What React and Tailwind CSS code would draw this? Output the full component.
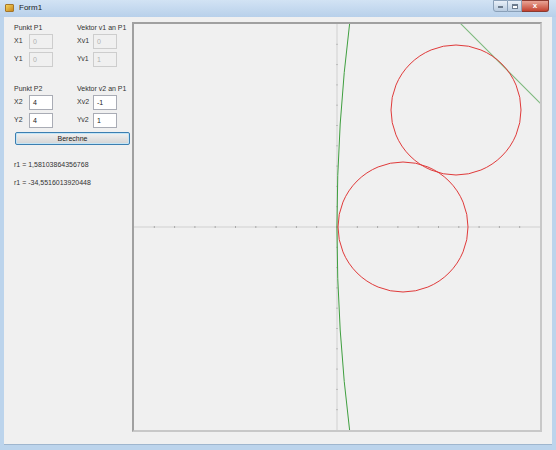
import React from 'react';

const font = { fontFamily: '"Liberation Sans", Arial, sans-serif' };

const TextBox = ({ value, disabled }) => (
    <div
        className={`w-[24px] h-[15px] border pl-[3px] text-[7px] leading-[13px] ${disabled ? 'border-[#cdcdcd] bg-[#f0f0f0] text-[#b0b0b0]' : 'border-[#a9acb5] bg-white text-[#222]'}`}
    >
        {value}
    </div>
);

const Field = ({ label, value, disabled, labelWidth }) => (
    <div className="flex items-center h-[15px]">
        <span className={`${labelWidth} text-[7px] text-[#333]`}>{label}</span>
        <TextBox value={value} disabled={disabled} />
    </div>
);

const Group = ({ title1, title2, rows, disabled }) => (
    <div className="flex flex-col">
        <div className="flex text-[7px] leading-[9px] text-[#333]">
            <span className="w-[63px]">{title1}</span>
            <span>{title2}</span>
        </div>
        <div className="flex flex-col gap-[3px] mt-[2px]">
            {rows.map((r, i) => (
                <div key={i} className="flex">
                    <div className="w-[63px]">
                        <Field label={r[0]} value={r[1]} disabled={disabled} labelWidth="w-[15px]" />
                    </div>
                    <Field label={r[2]} value={r[3]} disabled={disabled} labelWidth="w-[16px]" />
                </div>
            ))}
        </div>
    </div>
);

const Plot = () => {
    const c = 203;
    const step = 406 / 20;
    const ticks = [];
    for (let i = 1; i < 20; i++) ticks.push(i * step);
    const R = 1650;
    const off = R - Math.sqrt(R * R - 206 * 206);
    return (
        <svg width="406" height="406" className="block overflow-hidden">
            <line x1="0" y1={c} x2="406" y2={c} stroke="#d0d0d0" strokeWidth="1" />
            <line x1={c} y1="0" x2={c} y2="406" stroke="#d0d0d0" strokeWidth="1" />
            {ticks.map((t, i) => (
                <g key={i}>
                    <line x1={t} y1={c - 1} x2={t} y2={c + 1} stroke="#a8a8a8" strokeWidth="1" />
                    <line x1={c - 1} y1={t} x2={c + 1} y2={t} stroke="#bcbcbc" strokeWidth="1" />
                </g>
            ))}
            <path
                d={`M ${c + off} -3 A ${R} ${R} 0 0 0 ${c + off} 409`}
                fill="none"
                stroke="#3f9f3f"
                strokeWidth="1"
            />
            <line x1="322" y1="-5" x2="430" y2="103" stroke="#7cb87c" strokeWidth="1.1" />
            <circle cx="322" cy="86" r="65" fill="none" stroke="#e03a3a" strokeWidth="1" />
            <circle cx="269" cy={c} r="65" fill="none" stroke="#e03a3a" strokeWidth="1" />
        </svg>
    );
};

export default function App() {
    return (
        <div className="w-[556px] h-[450px] flex flex-col bg-[#bcd4ec] overflow-hidden" style={font}>
            {/* title bar */}
            <div className="h-[17px] flex items-start bg-gradient-to-b from-[#d2e3f4] to-[#b8d0ea]">
                <div className="mt-[4px] ml-[5px] w-[9px] h-[8px] rounded-[1px] bg-gradient-to-br from-[#f4d35a] to-[#c8871c] border border-[#a4762a]" />
                <span className="ml-[5px] mt-[3px] text-[8px] leading-[10px] font-normal text-[#222]">Form1</span>
                <div className="ml-auto mr-[7px] flex">
                    <div className="w-[15px] h-[12px] rounded-bl-[3px] border border-[#8aa0b8] bg-gradient-to-b from-[#e9f0f8] to-[#b9cce0] flex items-end justify-center pb-[3px]">
                        <div className="w-[5px] h-[2px] bg-white border border-[#6b7b8d]" />
                    </div>
                    <div className="w-[14px] h-[12px] border-y border-r border-[#8aa0b8] bg-gradient-to-b from-[#e9f0f8] to-[#b9cce0] flex items-center justify-center">
                        <div className="w-[6px] h-[5px] border border-[#6b7b8d] border-t-2 bg-white" />
                    </div>
                    <div className="w-[27px] h-[12px] rounded-br-[3px] border-y border-r border-[#8b3a30] bg-gradient-to-b from-[#e8a496] to-[#c24130] flex items-center justify-center text-white text-[8px] leading-none font-bold">
                        x
                    </div>
                </div>
            </div>
            {/* client area */}
            <div className="flex-1 flex px-[4px] pb-[5px]">
                <div className="flex-1 flex bg-[#f0f0f0] border-b border-[#9fb6ce]">
                    <div className="w-[128px] flex flex-col pl-[10px] pt-[6px]">
                        <Group
                            title1="Punkt P1"
                            title2="Vektor v1 an P1"
                            disabled
                            rows={[['X1', '0', 'Xv1', '0'], ['Y1', '0', 'Yv1', '1']]}
                        />
                        <div className="mt-[17px]">
                            <Group
                                title1="Punkt P2"
                                title2="Vektor v2 an P1"
                                rows={[['X2', '4', 'Xv2', '-1'], ['Y2', '4', 'Yv2', '1']]}
                            />
                        </div>
                        <button className="mt-[4px] ml-[1px] w-[115px] h-[13px] rounded-[2px] border border-[#3c7fb1] bg-gradient-to-b from-[#f2f2f2] to-[#d4d4d4] text-[7px] leading-[11px] text-[#222] shadow-[inset_0_0_0_1px_#c4e5f6]">
                            Berechne
                        </button>
                        <div className="mt-[15px] text-[7px] leading-[9px] text-[#333]">r1 = 1,58103864356768</div>
                        <div className="mt-[9px] text-[7px] leading-[9px] text-[#333]">r1 = -34,5516013920448</div>
                    </div>
                    <div className="pt-[5px]">
                        <div className="w-[410px] h-[410px] border-2 border-t-[#a0a0a0] border-l-[#a0a0a0] border-r-[#c8c8c8] border-b-[#c8c8c8] bg-[#f0f0f0]">
                            <Plot />
                        </div>
                    </div>
                </div>
            </div>
        </div>
    );
}
